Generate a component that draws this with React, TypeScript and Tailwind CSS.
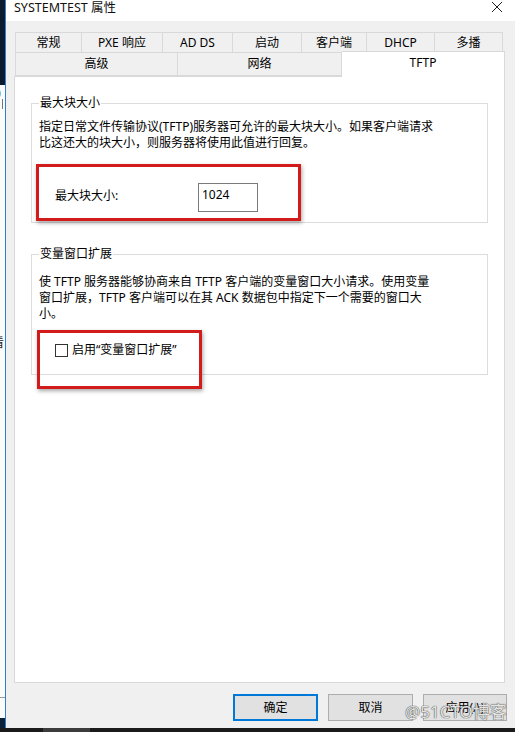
import React from 'react';

const font = 'font-["Noto_Sans","Noto_Sans_CJK_SC",sans-serif]';

const topTabs = [
  { label: '常规', w: 'w-[67px]' },
  { label: 'PXE 响应', w: 'w-[81px]' },
  { label: 'AD DS', w: 'w-[70px]' },
  { label: '启动', w: 'w-[69px]' },
  { label: '客户端', w: 'w-[65px]' },
  { label: 'DHCP', w: 'w-[68px]' },
  { label: '多播', w: 'w-[68px]' },
];

const Tab = ({ label, w, className = '' }: { label: string; w: string; className?: string }) => (
  <div
    className={`${w} flex items-center justify-center border border-l-0 first:border-l border-[#d9d9d9] bg-[#f0f0f0] text-[12px] leading-none ${className}`}
  >
    {label}
  </div>
);

const GroupBox = ({ title, children }: { title: string; children: React.ReactNode }) => (
  <fieldset className="mx-[16px] border border-[#dcdcdc] px-[7px]">
    <legend className="px-[1px] text-[12px] leading-[16px]">{title}</legend>
    {children}
  </fieldset>
);

const LeftEdge = () => (
  <div className="flex w-[5px] flex-col overflow-hidden">
    <div className="h-[85px] bg-[#0b1a2c]" />
    <div className="relative flex-1 bg-[#fbfbfb]">
      <span className="absolute left-[-6px] top-[3px] text-[12px] leading-none text-[#333]">0</span>
      <div className="absolute left-[2px] top-[14px] h-[10px] w-px bg-[#777]" />
      <span className="absolute left-[-8px] top-[252px] text-[12px] leading-none text-[#222]">看</span>
      <div className="absolute left-0 top-[612px] h-px w-full bg-[#9a9a9a]" />
    </div>
    <div className="h-[10px] bg-[#0d2238]" />
  </div>
);

export default function App() {
  return (
    <div className={`flex h-[732px] w-[515px] flex-col overflow-hidden bg-[#f0f0f0] text-black ${font}`}>
      <div className="flex h-[728px]">
        <LeftEdge />
        <div className="w-px bg-[#2f7fd0]" />

        {/* dialog */}
        <div className="relative flex flex-1 flex-col bg-[#f0f0f0]">
          <div className="flex h-[21px] items-start justify-between bg-white pl-[8px] pr-[12px]">
            <span className="text-[12.5px] leading-[15px] text-[#111]">SYSTEMTEST 属性</span>
            <svg width="12" height="12" viewBox="0 0 12 12" className="mt-[1px]">
              <path d="M1 1L11 11M11 1L1 11" stroke="#222" strokeWidth="1" />
            </svg>
          </div>

          {/* tabs */}
          <div className="mt-[11px] ml-[9px] flex h-[21px]">
            {topTabs.map((t) => (
              <Tab key={t.label} label={t.label} w={t.w} className="pt-px" />
            ))}
          </div>
          <div className="ml-[9px] flex h-[23px]">
            <Tab label="高级" w="w-[163px]" className="border-t-0" />
            <Tab label="网络" w="w-[164px]" className="border-t-0" />
            <div className="relative z-10 -mt-[2px] flex h-[26px] w-[163px] items-start justify-center border border-b-0 border-l-0 border-[#d9d9d9] bg-white pt-[5px] text-[12px] leading-none">
              TFTP
            </div>
          </div>

          {/* panel */}
          <div className="relative ml-[8px] h-[607px] w-[491px] border border-[#d9d9d9] bg-white pt-[18px]">
            <GroupBox title="最大块大小">
              <p className="mt-[8px] text-[12px] leading-[16px]">
                指定日常文件传输协议(TFTP)服务器可允许的最大块大小。如果客户端请求
                <br />
                比这还大的块大小，则服务器将使用此值进行回复。
              </p>
              <div className="mt-[32px] mb-[10px] flex items-center">
                <span className="ml-[16px] w-[143px] pb-[4px] text-[12px] leading-[16px]">最大块大小:</span>
                <div className="h-[29px] w-[60px] border border-[#7a7a7a] px-[3px] pt-[4px] text-[12px] leading-[14px]">
                  1024
                </div>
              </div>
            </GroupBox>

            <div className="h-[23px]" />

            <GroupBox title="变量窗口扩展">
              <p className="mt-[12px] text-[12px] leading-[16px]">
                使 TFTP 服务器能够协商来自 TFTP 客户端的变量窗口大小请求。使用变量
                <br />
                窗口扩展，TFTP 客户端可以在其 ACK 数据包中指定下一个需要的窗口大
                <br />
                小。
              </p>
              <div className="mt-[20px] mb-[16px] ml-[16px] flex items-center gap-[4px]">
                <div className="h-[13px] w-[13px] border border-[#333] bg-white" />
                <span className="text-[12px] leading-[16px]">启用“变量窗口扩展”</span>
              </div>
            </GroupBox>

            {/* red annotation boxes */}
            <div className="absolute left-[21px] top-[87px] h-[57px] w-[265px] border-[3px] border-[#d21c1c] shadow-[1px_2px_4px_rgba(0,0,0,0.35)]" />
            <div className="absolute left-[22px] top-[253px] h-[59px] w-[165px] border-[3px] border-[#d21c1c] shadow-[1px_2px_4px_rgba(0,0,0,0.35)]" />
          </div>

          {/* buttons */}
          <div className="mt-[11px] flex justify-end gap-[10px] pr-[8px]">
            <button className="h-[27px] w-[85px] border-2 border-[#0078d7] bg-[#e1e1e1] text-[12px]">确定</button>
            <button className="h-[27px] w-[85px] border border-[#adadad] bg-[#e1e1e1] text-[12px]">取消</button>
            <button className="h-[27px] w-[84px] border border-[#adadad] bg-[#e1e1e1] text-[12px]">应用(A)</button>
          </div>

          <span className="absolute left-[399px] top-[702px] text-[17px] leading-[20px] text-[#e4e4e4] [text-shadow:0_0_1px_#444,0_0_1px_#444]">
            @51CTO博客
          </span>
        </div>
      </div>

      {/* taskbar */}
      <div className="flex h-[4px] bg-[#1b1b1b]">
        <div className="w-[43px]" />
        <div className="w-[47px] bg-[#3c3c3c]" />
      </div>
    </div>
  );
}
